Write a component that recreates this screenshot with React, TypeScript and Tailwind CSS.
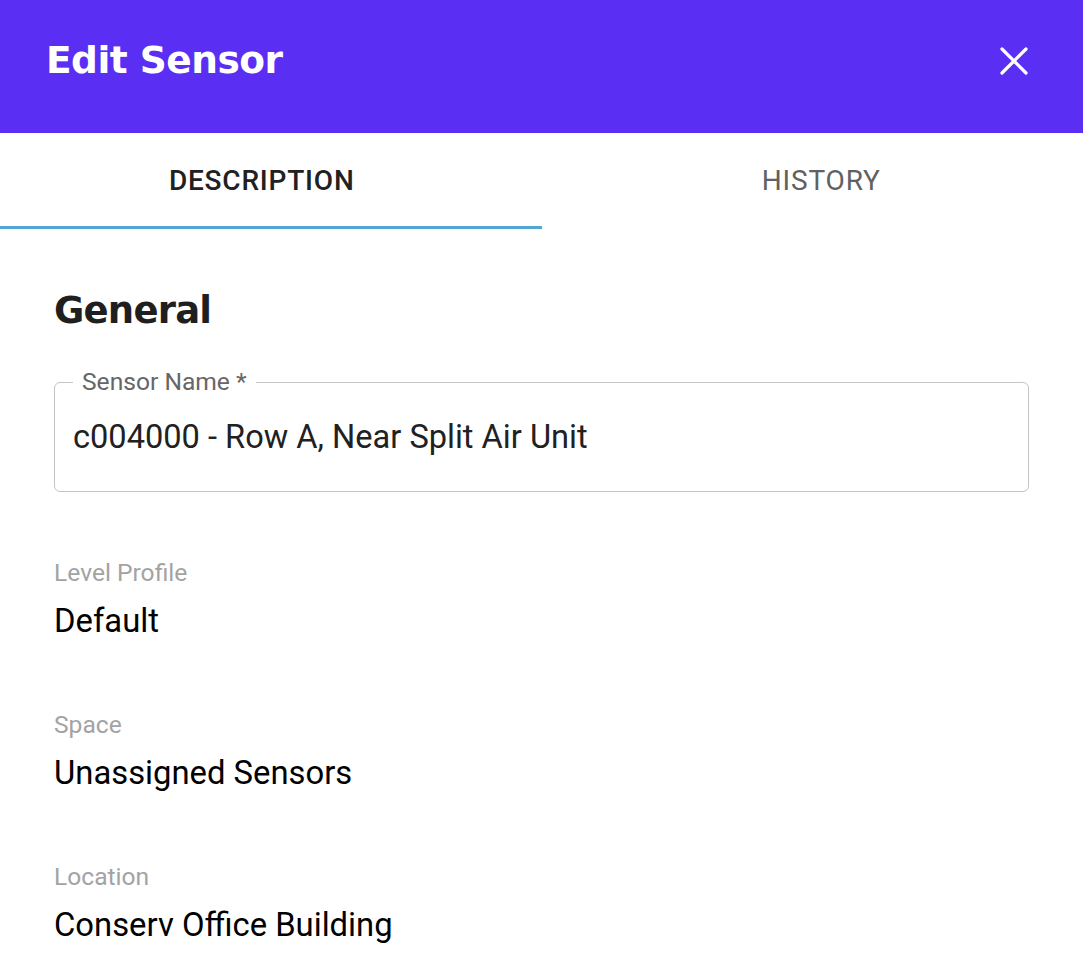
import { X } from "lucide-react";

type FieldProps = {
  label: string;
  value: string;
};

const ReadOnlyField: React.FC<FieldProps> = ({ label, value }) => {
  return (
    <div className="flex flex-col">
      <span className="text-[24.6px] leading-[28px] text-[#a3a3a3]">{label}</span>
      <span className="mt-[16px] text-[32.8px] leading-[36px] text-black">{value}</span>
    </div>
  );
};

const App: React.FC = () => {
  return (
    <div className="w-[1083px] h-[966px] bg-white overflow-hidden font-['Roboto',sans-serif]">
      <header className="flex h-[133px] items-center justify-between bg-[#5b2ef4] pb-[12px] pl-[46px] pr-[45px]">
        <h1 className="font-['DejaVu_Sans',sans-serif] text-[37.5px] font-bold tracking-[-0.5px] text-white">
          Edit Sensor
        </h1>
        <button aria-label="Close" className="text-white">
          <X size={48} strokeWidth={1.6} />
        </button>
      </header>

      <nav className="flex h-[96px]">
        <button className="flex flex-1 flex-col">
          <span className="flex flex-1 items-center justify-center pr-[18px] pt-[2px] text-[28px] font-medium tracking-[0.8px] text-[#212121]">
            DESCRIPTION
          </span>
          <span className="h-[3px] w-full bg-[#52a6d4]" />
        </button>
        <button className="flex flex-1 flex-col">
          <span className="flex flex-1 items-center justify-center pl-[18px] pt-[2px] text-[28px] tracking-[0.8px] text-[#616161]">
            HISTORY
          </span>
          <span className="h-[3px] w-full" />
        </button>
      </nav>

      <main className="px-[54px] pt-[58px]">
        <h2 className="font-['DejaVu_Sans',sans-serif] text-[37px] font-bold leading-[48px] tracking-[-0.8px] text-[#1f1f1f]">
          General
        </h2>

        <fieldset className="mt-[42px] h-[115px] rounded-[6px] border border-[#c4c4c4] px-[18px]">
          <legend className="px-[9px] text-[24.6px] leading-[10px] text-[#666]">Sensor Name *</legend>
          <div className="pt-[32px] text-[32.6px] leading-[36px] text-[#212121]">
            c004000 - Row A, Near Split Air Unit
          </div>
        </fieldset>

        <div className="mt-[67px] flex flex-col gap-[72px]">
          <ReadOnlyField label="Level Profile" value="Default" />
          <ReadOnlyField label="Space" value="Unassigned Sensors" />
          <ReadOnlyField label="Location" value="Conserv Office Building" />
        </div>
      </main>
    </div>
  );
};

export default App;
